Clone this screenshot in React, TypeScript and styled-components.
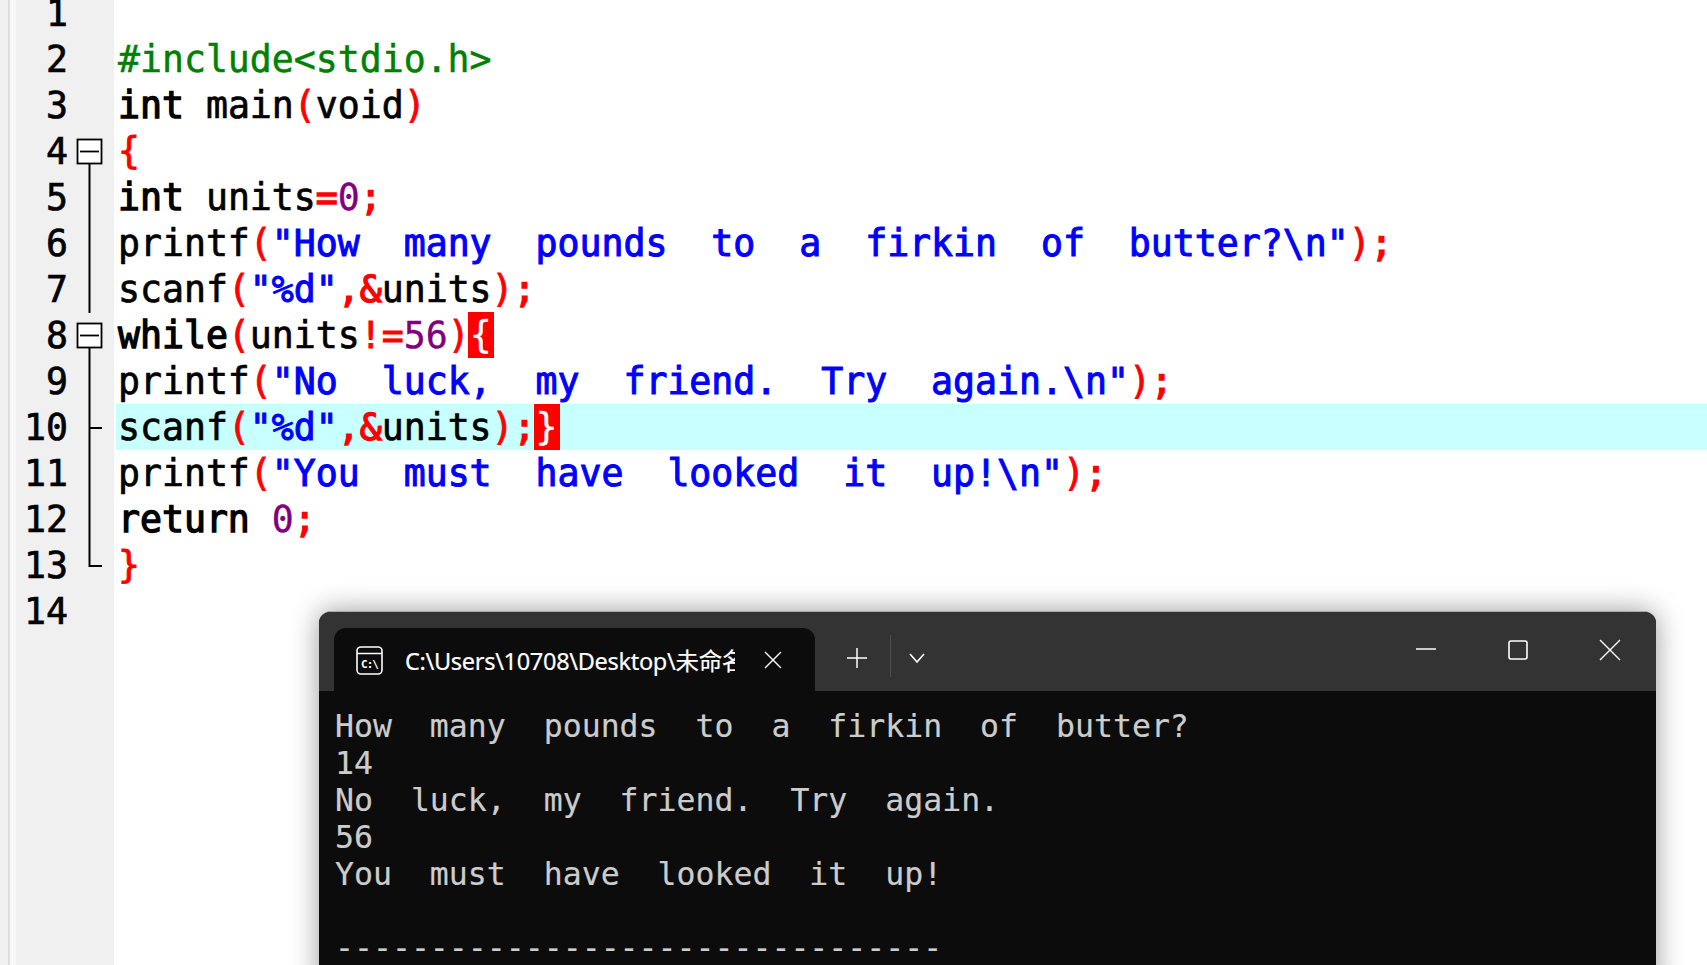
import * as React from 'react';
import styled, {createGlobalStyle} from 'styled-components';

type TokenKind = 'plain' | 'key' | 'pre' | 'sym' | 'punct' | 'str' | 'num' | 'brace';
type Token = [TokenKind, string];

const LINES: Token[][] = [
  [],
  [['pre', '#include<stdio.h>']],
  [['key', 'int'], ['plain', ' main'], ['sym', '('], ['plain', 'void'], ['sym', ')']],
  [['sym', '{']],
  [['key', 'int'], ['plain', ' units'], ['punct', '='], ['num', '0'], ['punct', ';']],
  [['plain', 'printf'], ['sym', '('], ['str', '"How  many  pounds  to  a  firkin  of  butter?\\n"'], ['sym', ')'], ['punct', ';']],
  [['plain', 'scanf'], ['sym', '('], ['str', '"%d"'], ['punct', ',&'], ['plain', 'units'], ['sym', ')'], ['punct', ';']],
  [['key', 'while'], ['sym', '('], ['plain', 'units'], ['sym', '!='], ['num', '56'], ['sym', ')'], ['brace', '{']],
  [['plain', 'printf'], ['sym', '('], ['str', '"No  luck,  my  friend.  Try  again.\\n"'], ['sym', ')'], ['punct', ';']],
  [['plain', 'scanf'], ['sym', '('], ['str', '"%d"'], ['punct', ',&'], ['plain', 'units'], ['sym', ')'], ['punct', ';'], ['brace', '}']],
  [['plain', 'printf'], ['sym', '('], ['str', '"You  must  have  looked  it  up!\\n"'], ['sym', ')'], ['punct', ';']],
  [['key', 'return'], ['plain', ' '], ['num', '0'], ['punct', ';']],
  [['sym', '}']],
  [],
];

type FoldKind = 'none' | 'box' | 'line' | 'tick' | 'end';
const FOLDS: FoldKind[] = ['none', 'none', 'none', 'box', 'line', 'line', 'line', 'box', 'line', 'tick', 'line', 'line', 'end', 'none'];

const OUTPUT = [
  'How  many  pounds  to  a  firkin  of  butter?',
  '14',
  'No  luck,  my  friend.  Try  again.',
  '56',
  'You  must  have  looked  it  up!',
  '',
  '--------------------------------',
];

const FoldMark = ({kind}: {kind: FoldKind}) => (
  <FoldSvg width="46" height="46" viewBox="0 0 46 46">
    {kind === 'box' && (
      <>
        <rect x="9.5" y="10.5" width="24" height="24" fill="#fff" stroke="#000" strokeWidth="1.8" />
        <path d="M12 22.5H31" stroke="#000" strokeWidth="1.8" />
        <path d="M21.5 34.5V46" stroke="#000" strokeWidth="2" />
      </>
    )}
    {kind === 'line' && <path d="M21.5 0V46" stroke="#000" strokeWidth="2" />}
    {kind === 'tick' && <path d="M21.5 0V46M21.5 23H34" stroke="#000" strokeWidth="2" />}
    {kind === 'end' && <path d="M21.5 0V23H34" stroke="#000" strokeWidth="2" fill="none" />}
  </FoldSvg>
);

const App = () => {
  return (
    <Page>
      <GlobalStyle />
      <LeftStrip />
      <Gutter>
        {LINES.map((_, i) => (
          <GutterRow key={i}>
            <LineNumber>{i + 1}</LineNumber>
            <FoldMark kind={FOLDS[i]} />
          </GutterRow>
        ))}
      </Gutter>
      <Code>
        {LINES.map((tokens, i) => (
          <CodeLine key={i} $active={i === 9}>
            {tokens.map(([kind, text], j) => (
              <Tok key={j} $kind={kind}>
                {text}
              </Tok>
            ))}
          </CodeLine>
        ))}
      </Code>
      <Terminal>
        <TitleBar>
          <Tab>
            <svg width="30" height="30" viewBox="0 0 30 30" fill="none">
              <rect x="2" y="2" width="25" height="27" rx="4" stroke="#fff" strokeWidth="1.6" />
              <path d="M2 8.5H27" stroke="#fff" strokeWidth="1.6" />
              <text x="14.5" y="22.5" fill="#fff" fontSize="11" fontWeight="700" textAnchor="middle" fontFamily="'DejaVu Sans Mono', monospace" letterSpacing="-1">
                C:\
              </text>
            </svg>
            <TabTitle>C:\Users\10708\Desktop\未命名1.exe</TabTitle>
            <svg width="20" height="20" viewBox="0 0 20 20" stroke="#fff" strokeWidth="1.4">
              <path d="M2 2L18 18M18 2L2 18" />
            </svg>
          </Tab>
          <BarIcon $width={75} $shift={9}>
            <svg width="22" height="22" viewBox="0 0 22 22" stroke="#fff" strokeWidth="1.5">
              <path d="M11 1V21M1 11H21" />
            </svg>
          </BarIcon>
          <BarSeparator />
          <BarIcon $width={52} $shift={0}>
            <svg width="16" height="10" viewBox="0 0 16 10" stroke="#fff" strokeWidth="1.6" fill="none">
              <path d="M1 1L8 9L15 1" />
            </svg>
          </BarIcon>
          <WindowControls>
            <WindowButton>
              <svg width="22" height="4" viewBox="0 0 22 4" stroke="#fff" strokeWidth="1.6">
                <path d="M1 1H21" />
              </svg>
            </WindowButton>
            <WindowButton>
              <svg width="22" height="22" viewBox="0 0 22 22" stroke="#fff" strokeWidth="1.6" fill="none">
                <rect x="2" y="2" width="18" height="18" rx="2" />
              </svg>
            </WindowButton>
            <WindowButton>
              <svg width="22" height="22" viewBox="0 0 22 22" stroke="#fff" strokeWidth="1.4">
                <path d="M1 1L21 21M21 1L1 21" />
              </svg>
            </WindowButton>
          </WindowControls>
        </TitleBar>
        <Output>
          {OUTPUT.map((line, i) => (
            <OutputLine key={i}>{line}</OutputLine>
          ))}
        </Output>
      </Terminal>
    </Page>
  );
};

const GlobalStyle = createGlobalStyle`
  html, body {
    margin: 0;
    padding: 0;
    background: #fff;
    overflow: hidden;
  }
`;

const Page = styled.div`
  position: relative;
  display: flex;
  width: 1707px;
  height: 965px;
  overflow: hidden;
  background: #fff;
  font-family: 'DejaVu Sans Mono', monospace;
`;

const LeftStrip = styled.div`
  flex: none;
  width: 16px;
  box-sizing: border-box;
  border-left: 8px solid #f0f0f0;
  background: linear-gradient(to right, #ddd 2px, #f8f8f8 2px);
`;

const Gutter = styled.div`
  flex: none;
  width: 98px;
  margin-right: 2px;
  background: #f0f0f0;
  overflow: hidden;
`;

const GutterRow = styled.div`
  display: flex;
  height: 46px;
  &:first-child {
    margin-top: -9px;
  }
`;

const LineNumber = styled.div`
  width: 52px;
  text-align: right;
  font-size: 36.5px;
  line-height: 46px;
  color: #000;
  -webkit-text-stroke: 0.7px #000;
`;

const FoldSvg = styled.svg`
  flex: none;
  display: block;
`;

const Code = styled.div`
  flex: 1;
  min-width: 0;
  margin-top: -10px;
`;

const CodeLine = styled.div<{$active: boolean}>`
  height: 46px;
  padding-left: 2px;
  font-size: 36.5px;
  line-height: 48px;
  white-space: pre;
  background: ${p => (p.$active ? '#c8ffff' : 'transparent')};
`;

const TOKEN_COLORS: Record<TokenKind, string> = {
  plain: '#000',
  key: '#000',
  pre: '#008000',
  sym: '#f00',
  punct: '#f00',
  str: '#00f',
  num: '#800080',
  brace: '#fff',
};

const TOKEN_STROKES: Record<TokenKind, number> = {
  plain: 0.7,
  key: 1.3,
  pre: 0.5,
  sym: 0.9,
  punct: 1.4,
  str: 1,
  num: 0.4,
  brace: 0.4,
};

const Tok = styled.span<{$kind: TokenKind}>`
  display: inline-block;
  vertical-align: top;
  height: 46px;
  color: ${p => TOKEN_COLORS[p.$kind]};
  -webkit-text-stroke: ${p => TOKEN_STROKES[p.$kind]}px ${p => TOKEN_COLORS[p.$kind]};
  background: ${p => (p.$kind === 'brace' ? '#f00' : 'transparent')};
  padding: 0 ${p => (p.$kind === 'brace' ? 2 : 0)}px;
  margin: 0 ${p => (p.$kind === 'brace' ? -2 : 0)}px;
`;

const Terminal = styled.div`
  position: absolute;
  left: 319px;
  top: 611px;
  width: 1337px;
  height: 380px;
  border-radius: 12px 12px 0 0;
  border-top: 1px solid #aaa;
  background: #0c0c0c;
  box-shadow: 0 0 28px rgba(0, 0, 0, 0.4);
  overflow: hidden;
`;

const TitleBar = styled.div`
  display: flex;
  align-items: stretch;
  height: 79px;
  padding: 16px 0 0 15px;
  box-sizing: border-box;
  background: #333;
`;

const Tab = styled.div`
  flex: none;
  display: flex;
  align-items: center;
  width: 481px;
  box-sizing: border-box;
  padding-left: 21px;
  border-radius: 12px 12px 0 0;
  background: #0c0c0c;
`;

const TabTitle = styled.div`
  flex: none;
  width: 330px;
  margin: 0 28px 0 20px;
  overflow: hidden;
  white-space: nowrap;
  color: #fff;
  font-family: 'Noto Sans', 'Noto Sans CJK SC', sans-serif;
  font-size: 23.5px;
  letter-spacing: -0.3px;
  -webkit-text-stroke: 0.2px #fff;
`;

const BarIcon = styled.div<{$width: number; $shift: number}>`
  flex: none;
  display: flex;
  align-items: center;
  justify-content: center;
  box-sizing: border-box;
  width: ${p => p.$width}px;
  padding-left: ${p => p.$shift}px;
  margin-bottom: 4px;
`;

const BarSeparator = styled.div`
  flex: none;
  width: 1px;
  margin: 7px 0 14px 0;
  background: #505050;
`;

const WindowControls = styled.div`
  display: flex;
  margin-left: auto;
  margin-top: -16px;
  height: 76px;
`;

const WindowButton = styled.div`
  display: flex;
  align-items: center;
  justify-content: center;
  width: 92px;
`;

const Output = styled.div`
  padding: 17px 0 0 16px;
`;

const OutputLine = styled.div`
  height: 37px;
  color: #ccc;
  font-size: 31.52px;
  line-height: 37px;
  white-space: pre;
  -webkit-text-stroke: 0.2px #ccc;
`;

export default App;
